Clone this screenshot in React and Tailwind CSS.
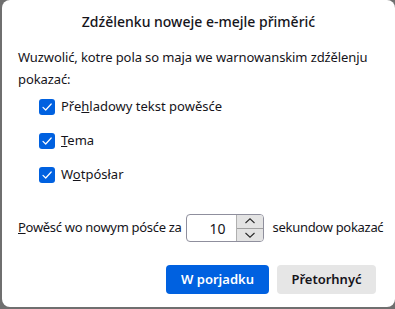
import React from "react";

const Check = ({ children }) => (
  <label className="flex items-center h-[16px] gap-[6px]">
    <span className="w-[16px] h-[16px] rounded-[3px] bg-[#0061e0] flex items-center justify-center">
      <svg width="12" height="12" viewBox="0 0 12 12">
        <path d="M2 6.3 L4.7 9 L10.2 3" fill="none" stroke="#fff" strokeWidth="1.2" strokeLinecap="round" strokeLinejoin="round" />
      </svg>
    </span>
    <span>{children}</span>
  </label>
);

const Chevron = ({ up }) => (
  <svg width="12" height="8" viewBox="0 0 12 8">
    <path
      d={up ? "M1.5 6 L6 1.8 L10.5 6" : "M1.5 2 L6 6.2 L10.5 2"}
      fill="none"
      stroke="#2a2a2a"
      strokeWidth="1.1"
    />
  </svg>
);

export default function App() {
  return (
    <div
      className="w-[395px] h-[309px] bg-[#6f6f6f] pl-[2px] overflow-hidden text-[#15141a] whitespace-nowrap"
      style={{ fontFamily: '"Noto Sans", "Open Sans", sans-serif' }}
    >
      <div className="w-[393px] h-[307px] bg-white rounded-lg flex flex-col px-[16px]">
        <h1 className="pt-[12px] text-center text-[14px] leading-[20px] font-medium">
          Zdźělenku noweje e-mejle přiměrić
        </h1>

        <p className="mt-[14px] text-[13px] leading-[22px] tracking-[-0.1px]">
          Wuzwolić, kotre pola so maja we warnowanskim zdźělenju
          <br />
          pokazać:
        </p>

        <div className="mt-[9px] pl-[21px] flex flex-col gap-[18px] text-[13px]">
          <Check>
            Pře<u>h</u>ladowy tekst powěsće
          </Check>
          <Check>
            <u>T</u>ema
          </Check>
          <Check>
            W<u>o</u>tpósłar
          </Check>
        </div>

        <div className="mt-[31px] flex items-center text-[13px] tracking-[-0.3px]">
          <span>
            <u>P</u>owěsć wo nowym pósće za
          </span>
          <div className="ml-[4px] w-[78px] h-[28px] shrink-0 border border-[#8f8f9d] rounded-[4px] flex items-center overflow-hidden text-[14px] tracking-normal">
            <span className="flex-1 text-right pr-[10px]">10</span>
            <div className="w-[27px] h-full flex flex-col border-l border-[#b0b0b0]">
              <div className="flex-1 bg-[#e3e3e3] flex items-center justify-center border-b border-[#a0a0a0]">
                <Chevron up />
              </div>
              <div className="flex-1 bg-[#e3e3e3] flex items-center justify-center">
                <Chevron />
              </div>
            </div>
          </div>
          <span className="ml-[9px]">sekundow pokazać</span>
        </div>

        <div className="mt-[23px] flex justify-end gap-[8px] pr-[3px] text-[13px] font-semibold">
          <button className="w-[103px] h-[29px] rounded-[4px] bg-[#0061e0] text-white">
            W porjadku
          </button>
          <button className="w-[99px] h-[29px] rounded-[4px] bg-[#e6e6e6] text-[#15141a]">
            Přetorhnyć
          </button>
        </div>
      </div>
    </div>
  );
}
